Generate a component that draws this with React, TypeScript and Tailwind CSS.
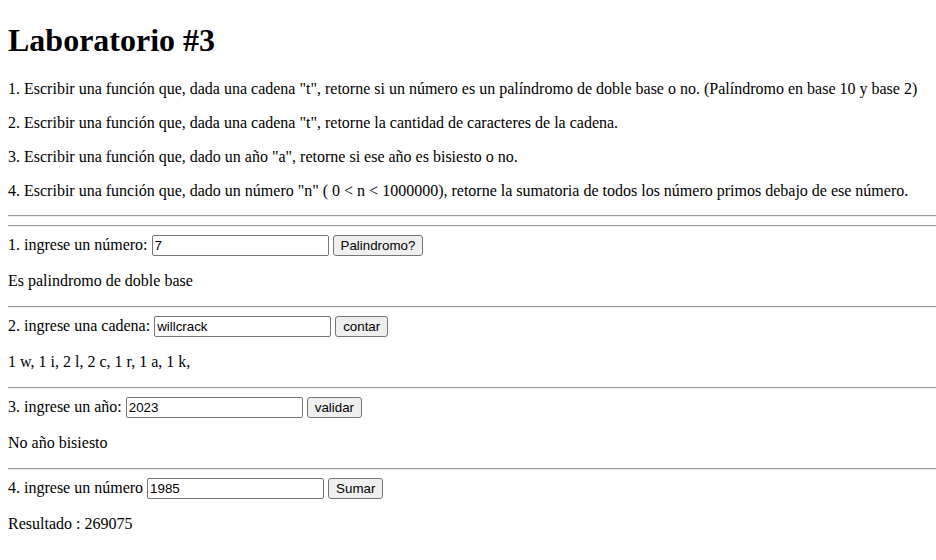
const inputCls =
  "inline-block w-[177px] h-[21px] px-[2px] py-[1px] border border-[#767676] rounded-[2px] bg-white text-black text-[13.333px] font-['Liberation_Sans',Arial,sans-serif] leading-[normal] align-baseline";
const buttonCls =
  "inline-block h-[21px] px-[7px] py-[1px] border border-[#767676] rounded-[3px] bg-[#efefef] text-black text-[13.333px] font-['Liberation_Sans',Arial,sans-serif] leading-[normal] align-baseline";

function Hr() {
  return <hr className="my-2 h-0 border-0 border-t border-t-[#9a9a9a] border-b border-b-[#eeeeee]" />;
}

interface Ejercicio {
  label: string;
  value: string;
  button: string;
  resultado: string;
}

const ejercicios: Ejercicio[] = [
  { label: "1. ingrese un número:", value: "7", button: "Palindromo?", resultado: "Es palindromo de doble base" },
  { label: "2. ingrese una cadena:", value: "willcrack", button: "contar", resultado: "1 w, 1 i, 2 l, 2 c, 1 r, 1 a, 1 k," },
  { label: "3. ingrese un año:", value: "2023", button: "validar", resultado: "No año bisiesto" },
  { label: "4. ingrese un número", value: "1985", button: "Sumar", resultado: "Resultado : 269075" },
];

export default function App() {
  return (
    <div className="pl-2 pt-[0.1px] bg-white text-black text-[16px] leading-[normal] font-['Liberation_Serif','Times_New_Roman',serif] min-h-[560px]">
      <h1 className="text-[32px] font-bold my-[21.44px] leading-[normal]">Laboratorio #3</h1>
      <p className="my-4">
        1. Escribir una función que, dada una cadena "t", retorne si un número es un palíndromo de doble base o no. (Palíndromo en base 10 y base 2)
      </p>
      <p className="my-4">2. Escribir una función que, dada una cadena "t", retorne la cantidad de caracteres de la cadena.</p>
      <p className="my-4">3. Escribir una función que, dado un año "a", retorne si ese año es bisiesto o no.</p>
      <p className="mt-4 mb-[15px]">
        4. Escribir una función que, dado un número "n" ( 0 &lt; n &lt; 1000000), retorne la sumatoria de todos los número primos debajo de ese número.
      </p>
      <Hr />
      {ejercicios.map((e) => (
        <div key={e.label}>
          <Hr />
          <div>
            {e.label}{" "}
            <input className={inputCls} defaultValue={e.value} />{" "}
            <button className={buttonCls}>{e.button}</button>
          </div>
          <p className="my-4">{e.resultado}</p>
        </div>
      ))}
    </div>
  );
}
